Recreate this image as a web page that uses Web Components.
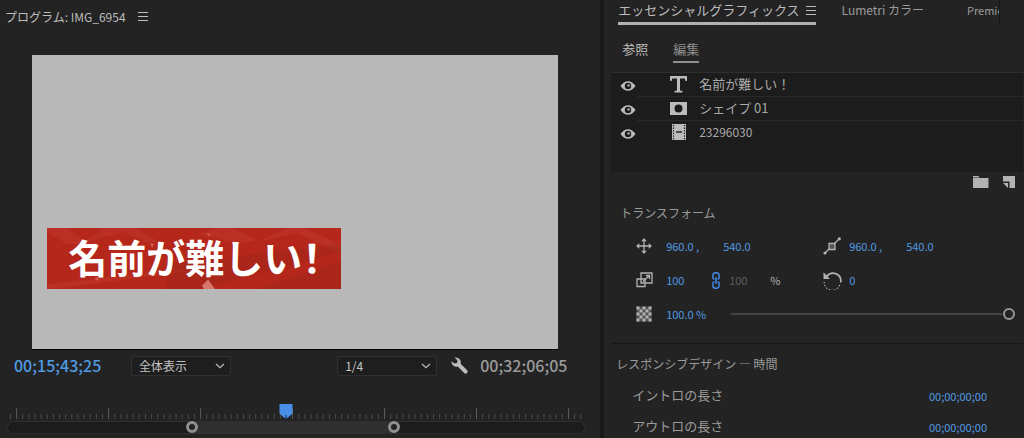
<!DOCTYPE html>
<html lang="ja">
<head>
<meta charset="utf-8">
<title>プログラム: IMG_6954</title>
<style>
html,body{margin:0;height:100%;background:#232323}
body{overflow:hidden;color:#b2b2b2;font:13px/20px "Noto Sans CJK JP",sans-serif;
--panel:#232323;--well:#1c1c1c;--edge:#303030;--blue:#509ae2;--dim:#9b9b9b}
</style>
</head>
<body>
<editor-workspace>
  <program-monitor></program-monitor>
  <graphics-panel></graphics-panel>
</editor-workspace>
<script>
const base = `*{box-sizing:border-box}
button,select{font:inherit;color:inherit;background:none;border:0;padding:0;margin:0;text-align:left;white-space:nowrap}
svg{display:block}`;
function define(name, html, setup){
  const t = document.createElement('template');
  t.innerHTML = html;
  customElements.define(name, class extends HTMLElement{
    constructor(){
      super();
      const root = this.attachShadow({mode:'open'});
      const s = document.createElement('style');
      s.textContent = base;
      root.append(s, t.content.cloneNode(true));
    }
    connectedCallback(){ if(setup) setup(this, this.shadowRoot); }
  });
}

const icons = {
  menu:[10,11,'<path d="M0 1.500h10M0 5.500h10M0 9.500h10" stroke="currentColor" stroke-width="1.200"/>'],
  wrench:[17,17,'<path d="M3.600.6a5 5 0 0 1 6 6.200l6.400 6.300a2 2 0 0 1-2.900 2.900L6.800 9.600A5 5 0 0 1 .5 4.300l3 2.300 2.600-.7.400-2.500z" fill="currentColor"/>'],
  eye:[16,12,'<path d="M.5 6C4.500 -.3 11.500 -.3 15.500 6 11.500 12.300 4.500 12.300 .5 6z" fill="currentColor"/><circle cx="8" cy="6" r="3.200" fill="#1c1c1c"/><circle cx="8.600" cy="5.400" r="1.200" fill="currentColor"/>'],
  type:[17,17,'<path d="M0 0h17v5h-1.500l-.7-2.500H10V14.500l2.500.5v1.500H4.500V15l2.500-.5V2.500H2.200L1.500 5H0z" fill="currentColor"/>'],
  shape:[17,17,'<path fill-rule="evenodd" d="M0 2h17v13H0zM8.500 4.500a4 4 0 1 0 0 8 4 4 0 0 0 0-8z" fill="currentColor"/>'],
  film:[17,17,'<path d="M2 0h14v16H2z" fill="currentColor"/><path d="M3.500 1v15M14.500 1v15" stroke="#1c1c1c" stroke-width="1.200" stroke-dasharray="1.300 1.300"/><path d="M6 8h6" stroke="#1c1c1c" stroke-width="1.400"/>'],
  folder:[16,12,'<path d="M0 1.500V0h5.500l1 1.500zM0 2h15.500v10H0z" fill="currentColor"/>'],
  page:[12,12,'<path d="M0 0h12v12H6.500V5.500H0z" fill="currentColor"/><path d="M0 7h5v5z" fill="currentColor"/>'],
  move:[16,16,'<path d="M8 2v12M2 8h12" stroke="currentColor" stroke-width="1.300"/><path d="M8 0l2.700 3.300H5.300zM8 16l2.700-3.300H5.300zM0 8l3.300-2.700v5.400zM16 8l-3.300-2.700v5.400z" fill="currentColor"/>'],
  scale:[17,16,'<path d="M5 1h11v10H5zM1 7h8v7.500H1z" fill="none" stroke="currentColor" stroke-width="1.300"/><path d="M7 9.500l6-5.500M9.800 3.500h3.700V7" fill="none" stroke="currentColor" stroke-width="1.300"/>'],
  opacity:[16,16,'<g fill="currentColor">'+[0,1,2,3,4].map(r=>[0,1,2,3,4].map(c=>(r+c)%2?'':`<path d="M${c*3+.5} ${r*3+.5}h3v3h-3z"/>`).join('')).join('')+'<path opacity=".35" d="M.5.5h15v15H.5z"/></g>'],
  anchor:[18,18,'<path d="M2 16L16 2" stroke="currentColor" stroke-width="1.200"/><path d="M6 6.500h6v6H6z" fill="#555" stroke="currentColor" stroke-width="1.300"/><circle cx="2" cy="16" r="1.600" fill="currentColor"/><circle cx="16.300" cy="1.800" r="1.600" fill="currentColor"/>'],
  rotate:[19,19,'<path d="M3.500 5.500C9 -1 19 3 17.700 11.500" fill="none" stroke="currentColor" stroke-width="1.700"/><path d="M.5 1.200V8H7z" fill="currentColor"/><path d="M1.200 11A8 8 0 0 0 17 13" fill="none" stroke="currentColor" stroke-width="1.200" stroke-dasharray="1.300 1.700"/>'],
  link:[8,17,'<path d="M2.700 7H2A1.200 1.200 0 0 1 .9 5.500V3.500a3.100 2.800 0 0 1 6.200 0v2A1.300 1.300 0 0 1 5.500 7M5.300 10H6a1.200 1.200 0 0 1 1.100 1.500v2a3.100 2.800 0 0 1-6.200 0v-2A1.300 1.300 0 0 1 2.500 10M4 5v7" fill="none" stroke="currentColor" stroke-width="1.500"/>']
};
define('ui-icon','<style>:host{display:block;flex:none}</style><span></span>',(el,root)=>{
  const [w,h,d] = icons[el.getAttribute('name')];
  root.querySelector('span').innerHTML = `<svg width="${w}" height="${h}" viewBox="0 0 ${w} ${h}" aria-hidden="true">${d}</svg>`;
});

define('hot-text',`<style>:host{display:block;color:var(--blue);font-size:11px;line-height:20px}button{display:block}</style>
<button><slot></slot></button>`);

define('drop-down',`<style>
:host{display:block;position:relative;width:100px;flex:none}
select{appearance:none;display:block;width:100%;height:20px;padding:0 20px 0 7px;border:1px solid var(--edge);border-radius:2px;background:#1e1e1e;color:#c4c4c4;font-size:12px;line-height:18px}
svg{position:absolute;right:6px;top:7px;pointer-events:none}
</style><select><option></option></select>
<svg width="10" height="6" viewBox="0 0 10 6"><path d="M1 1l4 3.700L9 1" fill="none" stroke="#b8b8b8" stroke-width="1.300"/></svg>`,(el,root)=>{
  root.querySelector('option').textContent = el.getAttribute('value');
  root.querySelector('select').setAttribute('aria-label', el.getAttribute('label'));
});

define('title-banner',`<style>
:host{display:flex;align-items:center;position:relative;background:#b6271b;overflow:hidden;color:#fff}
svg{position:absolute;inset:0;width:100%;height:100%}
span{position:relative;padding:0 0 6px 21px;font-size:39px;line-height:56px;font-weight:700;white-space:nowrap;font-feature-settings:"halt"}
</style>
<svg viewBox="0 0 294 61" preserveAspectRatio="none">
<g fill="#c5473a" opacity=".3"><path d="M0 0h20l22 16-22 0L0 4zM38 14L58 0h30l24 14-14 0-20-10zM150 6l20-6h16l24 12-16 4zM210 14l30-14h18l36 17v8l-44-20z"/><path d="M0 56l160-18v3L0 61z"/></g>
<g fill="#8f2119" opacity=".3"><path d="M120 36L294 16v8L150 61h-30zM210 61l84-28v28z"/></g>
<path d="M155 57l6-6 7 10h-11z" fill="#d8786d"/><path d="M103 15l4 1-2 4zM160 5l3 1-1 3zM47 50l4-1 1 4z" fill="#d4584b"/>
</svg><span><slot></slot></span>`);

define('time-ruler',`<style>
:host{display:block;position:relative;margin:20px 15px 0 7px}
.ticks{width:100%;height:18px}
.head{position:absolute;left:47%;top:2px}
.bar{position:relative;height:13px;margin-top:1px;border:1px solid var(--edge);border-radius:7px;background:#1c1c1c}
.range{position:absolute;left:32%;right:33%;top:0;bottom:0;background:#303030}
button{position:absolute;top:-1px;width:12px;height:12px;border:3px solid #909090;border-radius:50%;background:var(--panel)}
.a{left:-6px}.b{right:-6px}
</style>
<svg class="ticks"></svg>
<svg class="head" width="14" height="16" viewBox="0 0 14 16"><path d="M.5 0h13v9.500L8.500 14h-3L.5 9.500z" fill="#4a8fe6"/><path d="M7 11v5" stroke="#17335c" stroke-width="1.200"/></svg>
<div class="bar"><div class="range"><button class="a" aria-label="開始"></button><button class="b" aria-label="終了"></button></div></div>`,(el,root)=>{
  let s='';
  for(let i=0;i<=93;i++){
    const x=(3.5+i*6.13)/578*100, major=i%15===1;
    s+=`<line x1="${x}%" x2="${x}%" y1="${major?6:12}" y2="17" stroke="${major?'#5c5c5c':'#4c4c4c'}"/>`;
  }
  root.querySelector('.ticks').innerHTML=s;
});

define('program-monitor',`<style>
:host{display:block;min-width:0;border-right:4px solid #191919}
header{display:flex;gap:12px;align-items:center;height:55px;padding:0 5px 22px;font-size:12px;color:#bcbcbc}
.frame{display:flex;position:relative;margin:0 42px 0 32px;aspect-ratio:526/295;background:#b8b8b8;border-bottom:1px solid #000}
title-banner{position:absolute;left:2.9%;top:58.8%;width:55.9%;height:20.9%}
.controls{display:flex;align-items:center;height:32px;padding:0 32px 0 14px}
.time{font-size:16px;font-weight:500;width:88px;flex:none;white-space:nowrap;padding-bottom:2px;color:var(--dim)}
.now{color:var(--blue);margin-right:29px}
.grow{flex:1}
.tool{margin:0 12px 0 14px;padding-bottom:2px;color:#bcbcbc}
</style>
<header><span>プログラム: IMG_6954</span><button aria-label="メニュー"><ui-icon name="menu"></ui-icon></button></header>
<div class="frame"><title-banner>名前が難しい！</title-banner></div>
<div class="controls"><button class="time now">00;15;43;25</button><drop-down value="全体表示" label="ズーム"></drop-down><span class="grow"></span><drop-down value="1/4" label="解像度"></drop-down><button class="tool" aria-label="設定"><ui-icon name="wrench"></ui-icon></button><span class="time">00;32;06;05</span></div>
<time-ruler></time-ruler>`);

define('layer-row',`<style>
:host{display:flex;height:24px;padding-left:9px;color:#a8a8a8}
button{width:16px;padding-top:2px;color:#bcbcbc}
div{display:flex;align-items:center;flex:1;margin-left:1px;padding-left:33px;border-bottom:1px solid #292929}
:host([plain]) div{border-color:transparent}
div ui-icon{color:#bcbcbc}
span{margin-left:12px;padding-bottom:2px}
:host([plain]) span{font-size:12px}
</style>
<button aria-label="表示"><ui-icon name="eye"></ui-icon></button><div><slot name="icon"></slot><span><slot></slot></span></div>`);

define('layer-list',`<style>
:host{display:block;height:100px;margin:9px 1px 0 7px;border-top:1px solid #2e2e2e;background:var(--well)}
ui-icon{color:#bcbcbc}
</style>
<layer-row><ui-icon slot="icon" name="type"></ui-icon>名前が難しい！</layer-row>
<layer-row><ui-icon slot="icon" name="shape"></ui-icon>シェイプ 01</layer-row>
<layer-row plain><ui-icon slot="icon" name="film"></ui-icon>23296030</layer-row>`);

define('transform-group',`<style>
:host{display:block;margin:0 1px 0 8px;padding:15px 8px 12px 8px;border-bottom:1px solid #171717;color:#b2b2b2}
h2{margin:0 0 6px;font:inherit;font-size:12px;color:var(--dim)}
.row{display:grid;grid-template-columns:30px 46px 17px 41px 53px 26px 57px 1fr;align-items:center;height:34px;padding-left:16px}
.wide{grid-column:2/4}
.y{grid-column:3/5;padding-left:11px}
.ax{grid-column:6}
.dim{font-size:11px;color:#5c5c5c}
.unit{font-size:11px}
.link{color:#3f86e0}
input{grid-column:4/-1;appearance:none;margin:0 0 0 2px;height:12px;background:linear-gradient(#444,#444) 0 5px/100% 2px no-repeat}
input::-webkit-slider-thumb{appearance:none;width:12px;height:12px;border:2px solid #969696;border-radius:50%;background:var(--panel);box-shadow:0 0 0 1px var(--panel)}
</style>
<h2>トランスフォーム</h2>
<div class="row"><ui-icon name="move"></ui-icon><hot-text>960.0 ,</hot-text><hot-text class="y">540.0</hot-text><ui-icon class="ax" name="anchor"></ui-icon><hot-text>960.0 ,</hot-text><hot-text>540.0</hot-text></div>
<div class="row"><ui-icon name="scale"></ui-icon><hot-text>100</hot-text><button class="link" aria-label="縦横比を固定"><ui-icon name="link"></ui-icon></button><span class="dim">100</span><span class="unit">%</span><ui-icon name="rotate"></ui-icon><hot-text>0</hot-text></div>
<div class="row"><ui-icon name="opacity"></ui-icon><hot-text class="wide">100.0 %</hot-text><input type="range" value="100" aria-label="不透明度"></div>`);

define('duration-group',`<style>
:host{display:block;padding:10px 37px 0 12px;color:var(--dim)}
h2{margin:0 0 5px;font:inherit;font-size:12px}
div{display:flex;justify-content:space-between;align-items:center;height:31px;padding-left:16px}
hot-text{margin-top:2px}
</style><h2>レスポンシブデザイン — 時間</h2>
<div><span>イントロの長さ</span><hot-text>00;00;00;00</hot-text></div>
<div><span>アウトロの長さ</span><hot-text>00;00;00;00</hot-text></div>`);

define('graphics-panel',`<style>
:host{display:block;min-width:0}
nav{display:flex;padding:0 24px 0 14px;color:var(--dim)}
nav button{display:flex;gap:6px;align-items:center;height:25px;padding-bottom:2px;border-bottom:3px solid transparent;flex:none}
nav .on{color:#bcbcbc;border-color:#b2b2b2}
.main .lum{margin-left:26px;font-size:12px}
.clip{flex:none;width:33px;margin-left:auto;overflow:hidden;border-right:1px solid #171717;font-size:11px}
.sub{padding:14px 0 0 18px;gap:25px}
.sub button{height:24px;border-width:2px}
.sub .off{color:#bcbcbc}
.sub .on{color:#8e8e8e;border-color:#8e8e8e}
.actions{display:flex;justify-content:flex-end;gap:14px;padding:4px 9px 0 0;height:16px;color:#b2b2b2}
</style>
<nav class="main"><button class="on">エッセンシャルグラフィックス<ui-icon name="menu"></ui-icon></button><button class="lum">Lumetri カラー</button><span class="clip">Premie</span></nav>
<nav class="sub"><button class="off">参照</button><button class="on">編集</button></nav>
<layer-list></layer-list>
<div class="actions"><button aria-label="グループ"><ui-icon name="folder"></ui-icon></button><button aria-label="新規レイヤー"><ui-icon name="page"></ui-icon></button></div>
<transform-group></transform-group>
<duration-group></duration-group>`);

define('editor-workspace',`<style>:host{display:grid;grid-template-columns:59fr 41fr;min-height:100vh;background:var(--panel)}</style>
<slot></slot>`);
</script>
</body>
</html>
